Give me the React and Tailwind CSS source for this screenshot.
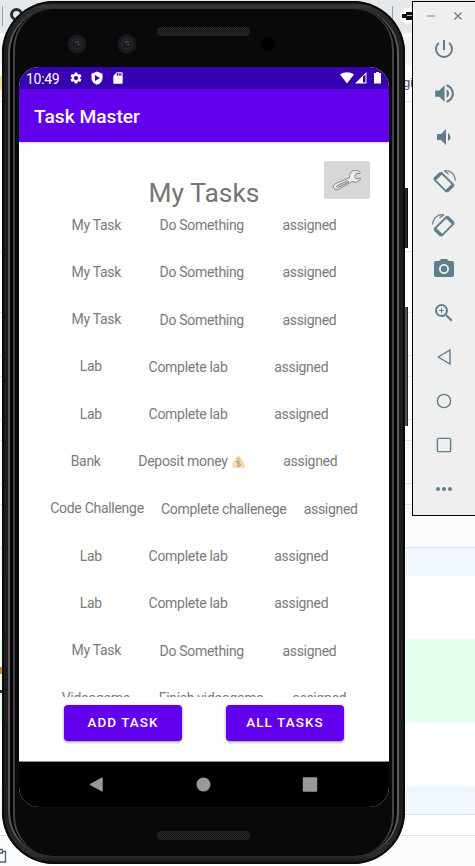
import React from 'react';
import {
  MdPowerSettingsNew,
  MdVolumeUp,
  MdVolumeDown,
  MdPhotoCamera,
  MdZoomIn,
  MdMoreHoriz,
  MdSettings,
  MdSdCard,
} from 'react-icons/md';

const tasks = [
  ['My Task', 'Do Something', 'assigned'],
  ['My Task', 'Do Something', 'assigned'],
  ['My Task', 'Do Something', 'assigned'],
  ['Lab', 'Complete lab', 'assigned'],
  ['Lab', 'Complete lab', 'assigned'],
  ['Bank', 'Deposit money', 'assigned', true],
  ['Code Challenge', 'Complete challenege', 'assigned'],
  ['Lab', 'Complete lab', 'assigned'],
  ['Lab', 'Complete lab', 'assigned'],
  ['My Task', 'Do Something', 'assigned'],
  ['Videogame', 'Finish videogame', 'assigned'],
];

function MoneyBag() {
  return (
    <svg viewBox="0 0 16 16" className="ml-[3px] h-[15px] w-[15px]">
      <path d="M5.6 1.2 8 2l2.4-.8-.6 3.3H6.3z" fill="#fbe3bd" />
      <path d="M6 4.6h4c2.8 2.2 5 5.400 5 8 0 2-1.500 2.700-3.500 2.700h-7C2.500 15.300 1 14.600 1 12.600c0-2.600 2.200-5.800 5-8z" fill="#fbdcae" />
      <path d="M5.800 4.700h4.400" stroke="#c9a68c" strokeWidth="1" />
      <path d="M10.200 7.800C9.300 6.900 6 6.800 6 8.600c0 1.900 4.300.9 4.300 2.900 0 1.900-3.600 1.700-4.600.6M8 6.300v7.400" fill="none" stroke="#b09a84" strokeWidth="1" />
    </svg>
  );
}

function Wrench() {
  return (
    <svg viewBox="0 0 30 22" className="h-[22px] w-[30px]" fill="#eceeed" stroke="#868887" strokeWidth="1" strokeLinejoin="round">
      <path d="M28.200 3.200 25 1.200 20 2.200 17.800 5.200 17.500 8.800 3 14.800C1.300 15.700 1 18 2.200 19.600 3.200 21 4.800 21.100 6.200 20.300L20 12.600 24 13.400 28.400 10.400 28.200 9.200 24.200 10 22.600 7.500 24.200 4.300 28 4.600z" />
      <path d="M5 16.600 15.500 11.700 17 13 6.500 18.300C4.800 18.900 3.800 17.500 5 16.600z" fill="#c9cbca" />
    </svg>
  );
}

function RotateDevice({ flip }) {
  return (
    <svg viewBox="0 0 24 24" className={flip ? 'h-6 w-6 -scale-x-100' : 'h-6 w-6'} fill="none" stroke="#607d8b">
      <path d="M9.200 3.800 21.400 15.800 14.300 22.600 2.400 10.700z" strokeWidth="1.900" strokeLinejoin="round" />
      <path d="M2.600 10.300 8.900 4.100M14.700 22.300 21 16.200" strokeWidth="3.400" />
      <path d="M12 1.800C18.200 .9 23 5 23.300 11.500M12 1.800 16.500 5" strokeWidth="1.300" />
    </svg>
  );
}

function Toolbar() {
  const md = 'h-6 w-6';
  const icons = [
    <MdPowerSettingsNew className={md} />,
    <MdVolumeUp className="h-[25px] w-[25px]" />,
    <MdVolumeDown className={md} />,
    <RotateDevice />,
    <RotateDevice flip />,
    <MdPhotoCamera className={md} />,
    <MdZoomIn className={md} />,
    <svg viewBox="0 0 24 24" className={md} fill="none" stroke="currentColor" strokeWidth="1.400"><path d="M18 5v14L6.300 12z" /></svg>,
    <svg viewBox="0 0 24 24" className={md} fill="none" stroke="currentColor" strokeWidth="1.400"><circle cx="12" cy="12" r="6.600" /></svg>,
    <svg viewBox="0 0 24 24" className={md} fill="none" stroke="currentColor" strokeWidth="1.400"><rect x="5.400" y="5.400" width="13.200" height="13.200" rx="1" /></svg>,
    <MdMoreHoriz className={md} />,
  ];
  return (
    <div className="absolute left-[412px] top-px flex h-[515px] w-[63px] flex-col border-y border-l border-black bg-[#efefef] text-[#607d8b]">
      <div className="flex h-[25px] shrink-0 items-center pl-[14px] pt-[3px]">
        <svg viewBox="0 0 40 10" className="h-[10px] w-[40px]" fill="none" stroke="#607d8b">
          <path d="M0 5h8" stroke="#9fb1b9" strokeWidth="1.600" />
          <path d="M27.500 1.500l7 7M34.500 1.500l-7 7" strokeWidth="1.200" />
        </svg>
      </div>
      {icons.map((icon, i) => (
        <div key={i} className="flex h-11 shrink-0 items-center justify-center">{icon}</div>
      ))}
    </div>
  );
}

function Backdrop() {
  const line = 'shrink-0 border-b border-[#dfe3e8]';
  return (
    <div className="flex h-[866px] w-[475px] flex-col bg-white">
      <div className="flex h-[33px] shrink-0 items-start justify-between bg-[#e4e8eb]">
        <svg viewBox="0 0 40 33" className="h-[33px] w-10" fill="none">
          <path d="M2.500 6v20" stroke="#9a9da1" />
          <circle cx="16.500" cy="14.500" r="5" stroke="#24292f" strokeWidth="3" />
        </svg>
        <svg viewBox="0 0 85 33" className="h-[33px] w-[85px]">
          <path d="M2.500 6v20" stroke="#9a9da1" />
          <circle cx="18" cy="15.500" r="8" fill="#fff" />
          <path d="M12 14h5v4h-5zM16 12h8v8h-8z" fill="#111" />
          <path d="M17 15.500h7" stroke="#bbb" />
        </svg>
      </div>
      <div className="h-[4px] shrink-0 bg-white" />
      <div className="h-[28px] shrink-0 bg-[#f1f3f4]" />
      <div className={`flex h-[37px] items-center justify-between ${line}`}>
        <span className="h-[14px] w-[3px] bg-[#fbe08a]" />
        <span className="mr-[61px] w-[11px] font-['Liberation_Sans'] text-[13px] text-[#444d63]">gi</span>
      </div>
      <div className={`h-[150px] ${line}`} />
      <div className={`h-[61px] ${line}`} />
      <div className={`h-[43px] ${line}`} />
      <div className={`h-[21px] ${line}`} />
      <div className={`h-[43px] ${line}`} />
      <div className={`h-[21px] ${line}`} />
      <div className={`h-[43px] bg-[#fafbfd] ${line}`} />
      <div className={`h-[21px] ${line}`} />
      <div className={`h-[43px] bg-[#fafbfd] ${line}`} />
      <div className="h-[28px] shrink-0 bg-[#f0f7ff]" />
      <div className="h-[63px] shrink-0" />
      <div className="flex h-[84px] shrink-0 flex-col bg-[#e6ffec] pt-[28px]">
        <span className="h-[7px] w-[3px] bg-[#d98a12]" />
        <span className="mt-[16px] h-[3px] w-[3px] bg-[#333]" />
      </div>
      <div className="h-[63px] shrink-0" />
      <div className={`h-[29px] bg-[#f0f7ff] ${line}`} />
      <div className={`h-[21px] ${line}`} />
      <div className="flex flex-1 items-start bg-[#fafbfd] pt-[12px]">
        <svg viewBox="0 0 8 16" className="h-4 w-2" fill="none" stroke="#57606a" strokeWidth="1.300">
          <path d="M0 5h2.500V1.500H0M2.500 3.500h3v10.500H0" />
        </svg>
      </div>
    </div>
  );
}

function Grille() {
  return (
    <div className="h-[9px] w-[93px] shrink-0 rounded-[4px] bg-[#151515] bg-[repeating-conic-gradient(#2b2b2b_0_25%,#141414_0_50%)] bg-[size:2px_2px]" />
  );
}

function Camera() {
  return (
    <svg viewBox="0 0 20 20" className="h-5 w-5">
      <circle cx="10" cy="10" r="9.500" fill="#151b20" />
      <circle cx="10" cy="10" r="6" fill="#24272a" />
      <circle cx="10" cy="10" r="4" fill="#1a1b1d" />
      <path d="M8 8.500l4-1M10.500 11l2-1" stroke="#5c5e62" strokeWidth="1.200" />
    </svg>
  );
}

function StatusBar() {
  return (
    <div className="flex h-[22px] shrink-0 items-center bg-[#3700b3] pl-[7px] pr-[6px] text-white">
      <span className="w-[43px] pt-px text-[14px] leading-[22px] tracking-[-0.3px]">10:49</span>
      <MdSettings className="h-[14px] w-[14px]" />
      <svg viewBox="0 0 24 24" className="ml-[7px] h-[14px] w-[14px]" fill="currentColor">
        <path fillRule="evenodd" d="M12 1 2.500 4.500v7.500c0 5.500 4 9.600 9.500 11.500 5.500-1.900 9.500-6 9.500-11.500V4.500zM8.500 7v10l8.500-5z" />
      </svg>
      <MdSdCard className="ml-[7px] h-[14px] w-[14px]" />
      <svg viewBox="0 0 42 14" className="ml-auto mr-px h-[14px] w-[42px]" fill="currentColor">
        <path d="M0 3.500C4 .4 10 .4 14 3.500L7 12.500z" />
        <path fillRule="evenodd" d="M26.500 1v11.500H15zM23 5.500v6h2.500v-8z" />
        <path d="M34 2h2V1h3v1h2v10.500h-7z" />
      </svg>
    </div>
  );
}

function Phone() {
  const button =
    'flex h-9 w-[118px] items-center justify-center rounded-[4px] bg-[#6200ee] pt-px text-[13.4px] font-medium tracking-[1.1px] text-white shadow-[0_1px_3px_rgba(0,0,0,0.45)]';
  return (
    <div className="absolute left-[2px] top-px flex">
      <div className="h-[863px] w-[403px] rounded-[52px] bg-[linear-gradient(#0b0b0b,#3a3a3a_5px,#2c2c2c_8px,#1c1c1c_50px,#1c1c1c_810px,#2c2c2c_855px,#111)] px-[6px] py-[8px] shadow-[inset_0_0_0_2px_#0a0a0a]">
        <div className="h-full rounded-[44px] border-x-2 border-[#5c5c60] bg-black px-[3px]">
          <div className="h-full rounded-[40px] border-x-2 border-[#434348] bg-[#090909] px-[4px]">
            <div className="flex h-[58px] w-[370px] items-start">
              <div className="flex w-[138px] gap-[30px] pl-[47.5px] pt-[25px]">
                <Camera />
                <Camera />
              </div>
              <div className="pt-[18px]"><Grille /></div>
              <div className="ml-[11px] mt-[28px] h-[14px] w-[14px] rounded-full bg-black" />
            </div>
            <div className="flex h-[740px] w-[370px] flex-col overflow-hidden rounded-[20px] bg-white">
              <StatusBar />
              <div className="z-10 flex h-[53px] shrink-0 items-center bg-[#6200ee] pl-[15px] pt-[3px] text-[19.2px] font-medium text-white shadow-[0_1px_2px_rgba(0,0,0,0.2)]">
                Task Master
              </div>
              <div className="grid h-[72px] shrink-0 grid-cols-[1fr_auto_1fr] pt-[19px] text-[#757575]">
                <span />
                <h1 className="pt-[16px] text-[26.4px] leading-[32px]">My Tasks</h1>
                <div className="mr-[19px] flex h-[38px] w-[46px] items-center justify-center justify-self-end rounded-[2px] bg-[#d6d7d7]">
                  <Wrench />
                </div>
              </div>
              <div className="h-[483px] shrink-0 overflow-hidden text-[14px] leading-[20px] tracking-[-0.29px] text-[#7a7a7a]">
                {tasks.map(([title, body, state, money], i) => (
                  <div key={i} className="flex h-[47.3px] items-start justify-evenly px-[14px] pt-[0.6px]">
                    <span>{title}</span>
                    <span className="flex items-center pt-[0.4px]">{body}{money && <MoneyBag />}</span>
                    <span className="pt-[0.4px]">{state}</span>
                  </div>
                ))}
              </div>
              <div className="flex shrink-0 gap-[44px] pl-[45px] pt-[8px]">
                <div className={button}>ADD TASK</div>
                <div className={button}>ALL TASKS</div>
              </div>
              <div className="mt-auto flex h-[46px] shrink-0 items-center justify-center border-t border-[#888] bg-black">
                <svg viewBox="0 0 240 20" className="h-5 w-[240px]" fill="#999">
                  <path d="M18.200 2.800v13.400L6 9.500z" stroke="#999" strokeWidth="1" strokeLinejoin="round" />
                  <circle cx="119.500" cy="9.500" r="7" />
                  <rect x="218.800" y="2.300" width="14.400" height="14.400" rx="1" />
                </svg>
              </div>
            </div>
            <div className="flex justify-center pt-[24px]"><Grille /></div>
          </div>
        </div>
      </div>
      <div className="flex w-[4px] flex-col pt-[187px]">
        <div className="h-[60px] w-[3px] border-r border-[#111] bg-[#292929]" />
        <div className="mt-[59px] h-[119px] w-[3px] border-r border-[#222] bg-[#555]" />
      </div>
    </div>
  );
}

export default function App() {
  return (
    <div className="relative h-[866px] w-[475px] overflow-hidden font-[Roboto,sans-serif]">
      <Backdrop />
      <Phone />
      <Toolbar />
    </div>
  );
}
